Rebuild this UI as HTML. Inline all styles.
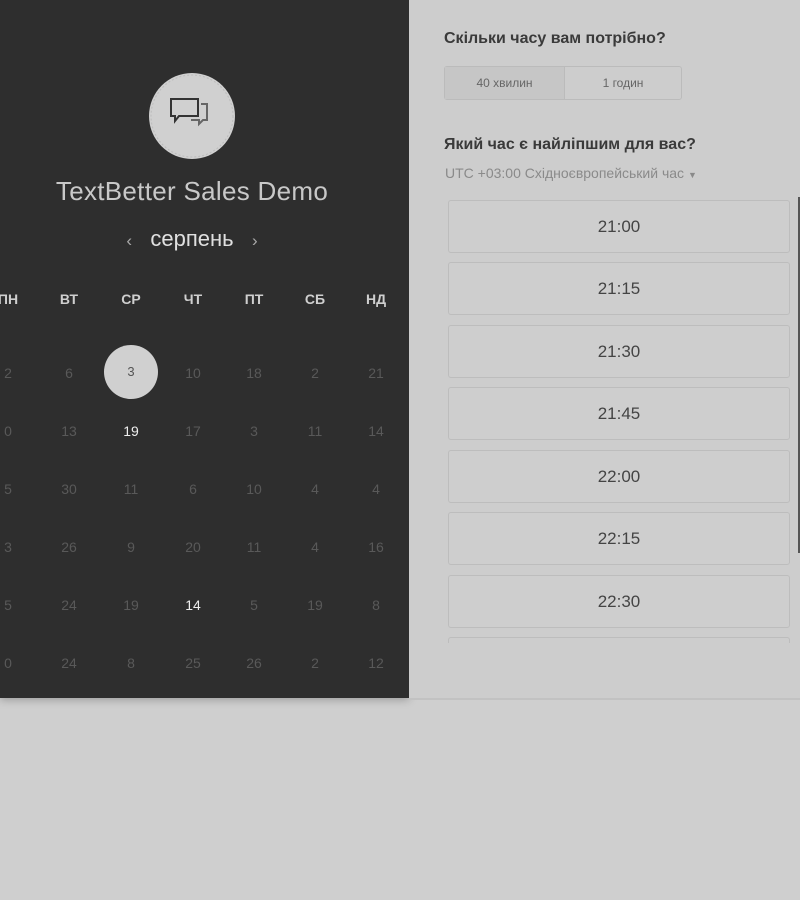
<!DOCTYPE html>
<html><head><meta charset="utf-8"><style>
body{margin:0;width:800px;height:900px;background:#cfcfcf;font-family:"Liberation Sans",sans-serif;position:relative;overflow:hidden}
.left{position:absolute;left:0;top:0;width:409px;height:698px;background:#2e2e2e;box-shadow:0 2px 8px rgba(0,0,0,.25)}
.right{position:absolute;left:409px;top:0;width:391px;height:698px;background:#cdcdcd;border-bottom:2px solid #c2c2c2}
.logo{position:absolute;left:149px;top:73px;width:86px;height:86px;border-radius:50%;background:#d0d0d0}
.title{position:absolute;left:0;width:384px;top:176px;text-align:center;color:#c8c8c8;font-size:26px;letter-spacing:0.3px}
.month{position:absolute;left:0;width:384px;top:226px;text-align:center;color:#e0e0e0;font-size:22px}
.c{position:absolute;width:50px;margin-left:-25px;text-align:center;font-size:14px;color:#595959}
.h{color:#cfcfcf;font-weight:bold;font-size:14px}
.slot{position:absolute;left:448px;width:342px;height:53px;border:1px solid #bdbdbd;border-radius:3px;background:#cecece;box-sizing:border-box;text-align:center;line-height:51px;font-size:17px;color:#444}
</style></head><body>
<div class="left">
<div class="logo"><svg width="86" height="86" viewBox="0 0 86 86"><circle cx="43" cy="43" r="41" fill="none" stroke="#bbb" stroke-dasharray="2 2"/><path d="M22 26h27v17H30l-4 5v-5h-4z" fill="none" stroke="#333" stroke-width="2"/><path d="M52 31h6v16h-4l-4 4v-4h-8" fill="none" stroke="#666" stroke-width="2"/></svg></div>
<div class="title">TextBetter Sales Demo</div>
<div class="month"><span style="font-size:17px;color:#aaa">‹</span>&nbsp;&nbsp; серпень &nbsp;&nbsp;<span style="font-size:17px;color:#aaa">›</span></div>
<div class="c h" style="left:8px;top:291px">ПН</div><div class="c h" style="left:69px;top:291px">ВТ</div><div class="c h" style="left:131px;top:291px">СР</div><div class="c h" style="left:193px;top:291px">ЧТ</div><div class="c h" style="left:254px;top:291px">ПТ</div><div class="c h" style="left:315px;top:291px">СБ</div><div class="c h" style="left:376px;top:291px">НД</div>
<div style="position:absolute;left:104px;top:345px;width:54px;height:54px;border-radius:50%;background:#d0d0d0"></div>
<div class="c" style="left:131px;top:364px;color:#555;font-size:13px">3</div>
<div class="c" style="left:8px;top:365px">2</div><div class="c" style="left:69px;top:365px">6</div><div class="c" style="left:193px;top:365px">10</div><div class="c" style="left:254px;top:365px">18</div><div class="c" style="left:315px;top:365px">2</div><div class="c" style="left:376px;top:365px">21</div>
<div class="c" style="left:8px;top:423px">0</div><div class="c" style="left:69px;top:423px">13</div><div class="c" style="left:131px;top:423px;color:#eee">19</div><div class="c" style="left:193px;top:423px">17</div><div class="c" style="left:254px;top:423px">3</div><div class="c" style="left:315px;top:423px">11</div><div class="c" style="left:376px;top:423px">14</div>
<div class="c" style="left:8px;top:481px">5</div><div class="c" style="left:69px;top:481px">30</div><div class="c" style="left:131px;top:481px">11</div><div class="c" style="left:193px;top:481px">6</div><div class="c" style="left:254px;top:481px">10</div><div class="c" style="left:315px;top:481px">4</div><div class="c" style="left:376px;top:481px">4</div>
<div class="c" style="left:8px;top:539px">3</div><div class="c" style="left:69px;top:539px">26</div><div class="c" style="left:131px;top:539px">9</div><div class="c" style="left:193px;top:539px">20</div><div class="c" style="left:254px;top:539px">11</div><div class="c" style="left:315px;top:539px">4</div><div class="c" style="left:376px;top:539px">16</div>
<div class="c" style="left:8px;top:597px">5</div><div class="c" style="left:69px;top:597px">24</div><div class="c" style="left:131px;top:597px">19</div><div class="c" style="left:193px;top:597px;color:#eee">14</div><div class="c" style="left:254px;top:597px">5</div><div class="c" style="left:315px;top:597px">19</div><div class="c" style="left:376px;top:597px">8</div>
<div class="c" style="left:8px;top:655px">0</div><div class="c" style="left:69px;top:655px">24</div><div class="c" style="left:131px;top:655px">8</div><div class="c" style="left:193px;top:655px">25</div><div class="c" style="left:254px;top:655px">26</div><div class="c" style="left:315px;top:655px">2</div><div class="c" style="left:376px;top:655px">12</div>
</div>
<div class="right"></div>
<div style="position:absolute;left:444px;top:30px;font-size:16px;font-weight:bold;color:#3a3a3a">Скільки часу вам потрібно?</div>
<div style="position:absolute;left:444px;top:66px;width:238px;height:34px;border:1px solid #bbb;border-radius:3px;box-sizing:border-box;display:flex;font-size:12px;color:#666">
<div style="width:119px;background:#c6c6c6;border-right:1px solid #bbb;text-align:center;line-height:32px">40 хвилин</div><div style="flex:1;text-align:center;line-height:32px">1 годин</div></div>
<div style="position:absolute;left:444px;top:136px;font-size:16px;font-weight:bold;color:#3a3a3a">Який час є найліпшим для вас?</div>
<div style="position:absolute;left:445px;top:165px;font-size:14px;color:#8a8a8a">UTC +03:00 Східноєвропейський час <span style="font-size:9px">▼</span></div>
<div class="slot" style="top:200px">21:00</div>
<div class="slot" style="top:262px">21:15</div>
<div class="slot" style="top:325px">21:30</div>
<div class="slot" style="top:387px">21:45</div>
<div class="slot" style="top:450px">22:00</div>
<div class="slot" style="top:512px">22:15</div>
<div class="slot" style="top:575px">22:30</div>
<div style="position:absolute;left:448px;top:637px;width:342px;height:6px;border:1px solid #bdbdbd;border-bottom:none;border-radius:3px 3px 0 0;box-sizing:border-box"></div>
<div style="position:absolute;left:798px;top:197px;width:2px;height:356px;background:#555"></div>
</body></html>
